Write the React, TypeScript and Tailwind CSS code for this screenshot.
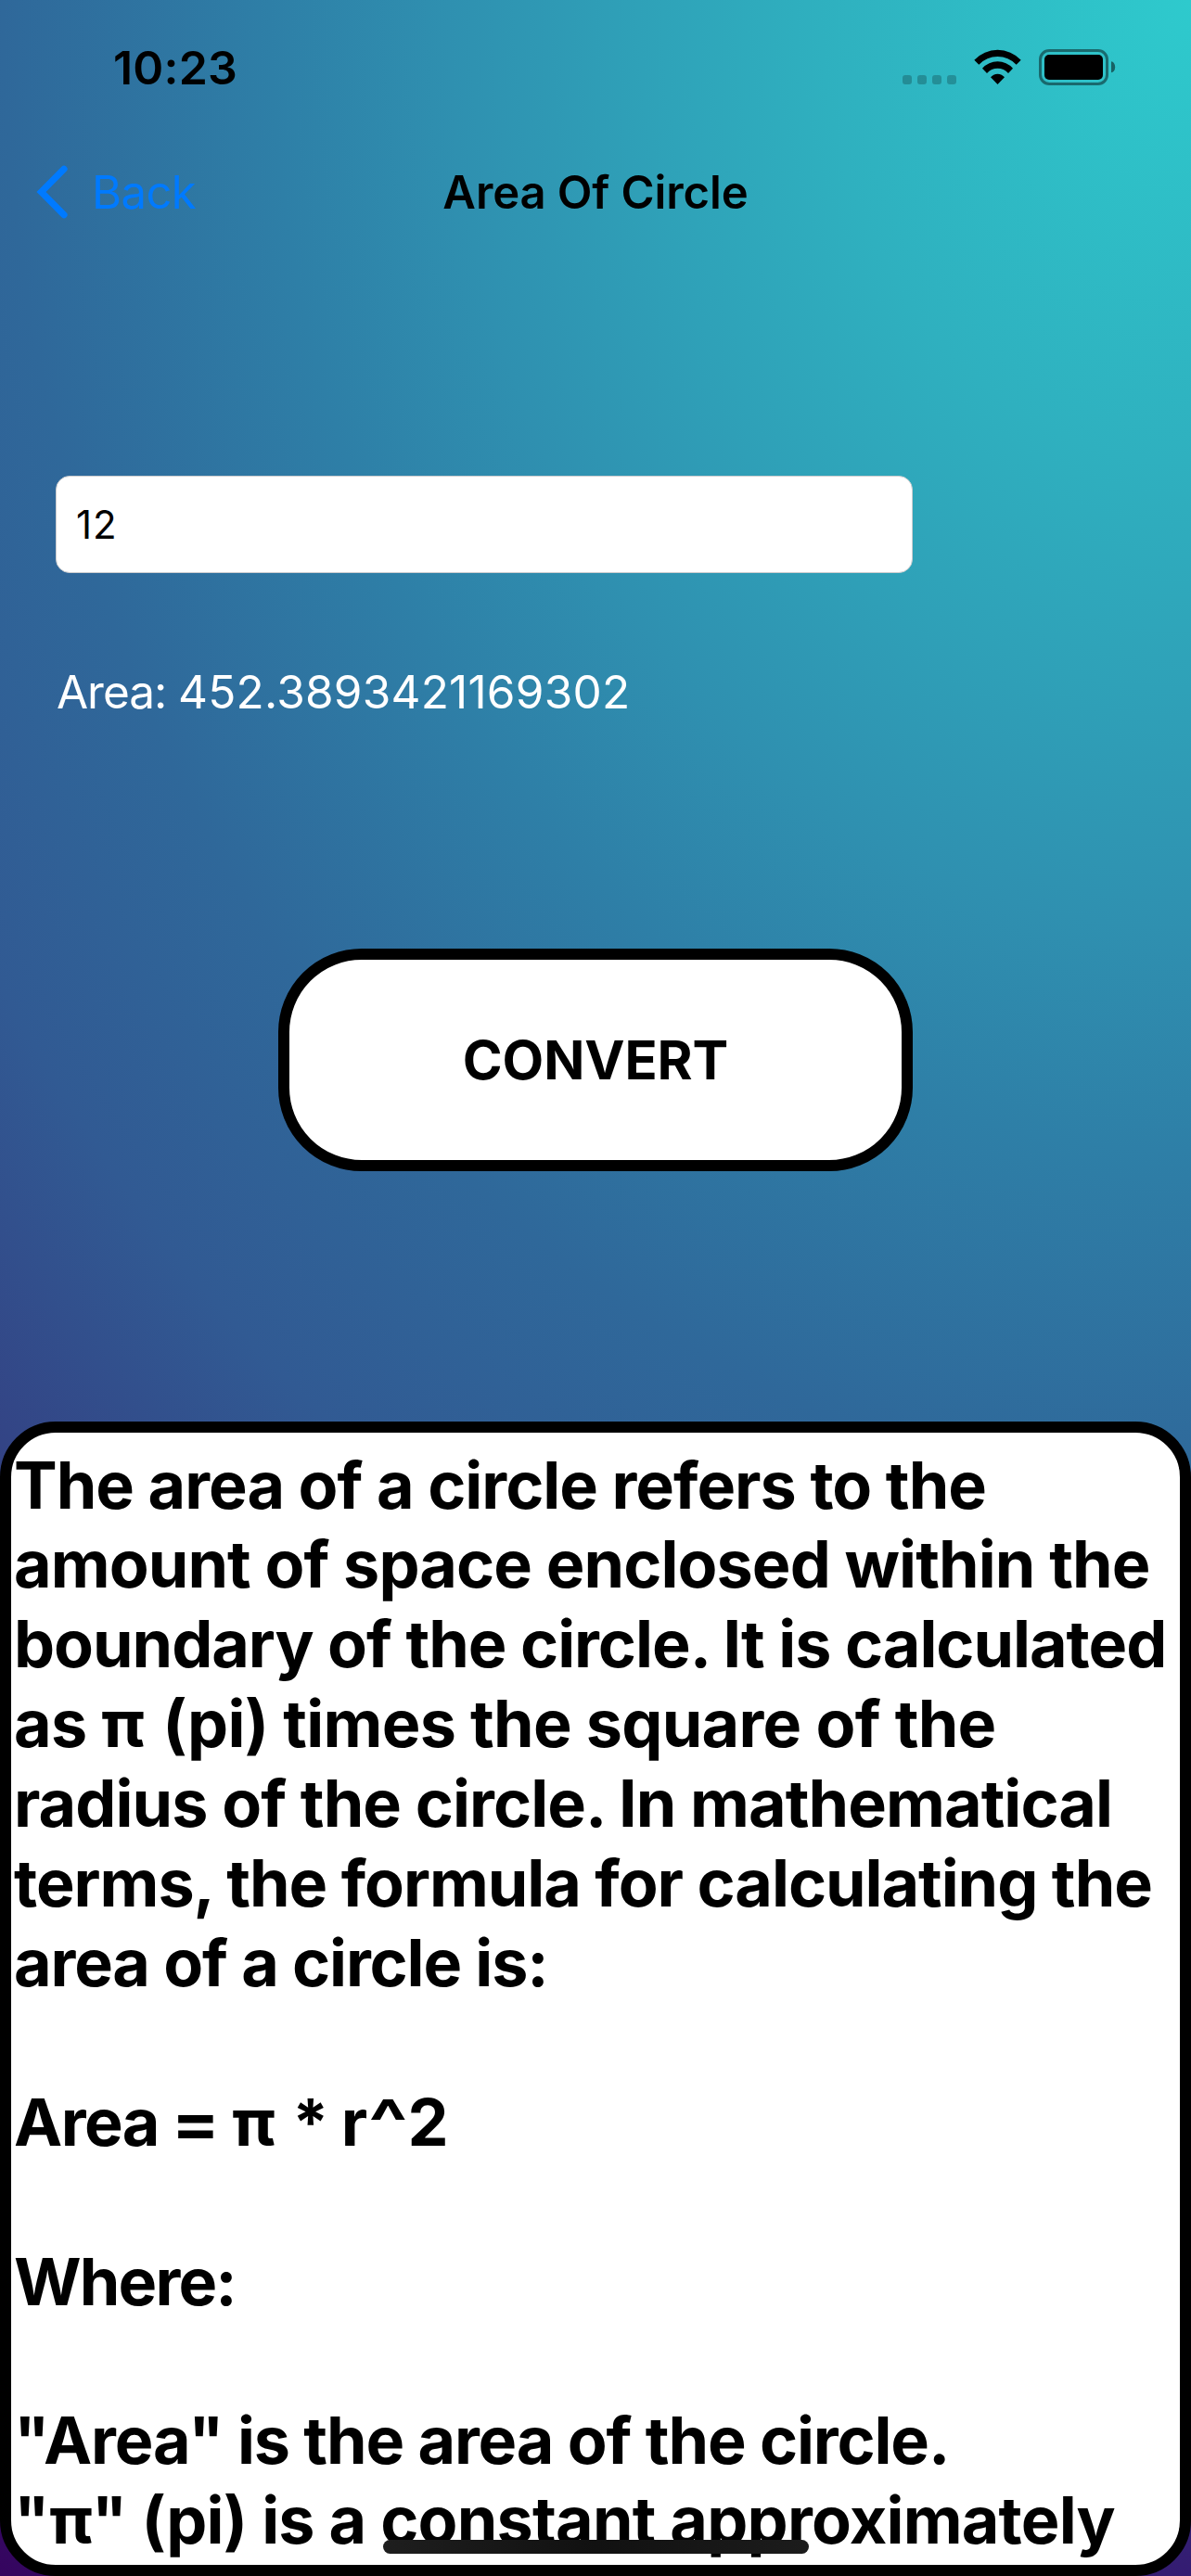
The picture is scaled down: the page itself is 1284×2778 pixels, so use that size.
import React from 'react';

function StatusIcons() {
  return (
    <svg className="h-[39px] w-[230px]" viewBox="219 69 690 117" fill="black" aria-hidden="true">
      <g opacity="0.22">
        <rect x="219" y="153" width="30" height="30" rx="9" />
        <rect x="267" y="153" width="30" height="30" rx="9" />
        <rect x="315" y="153" width="30" height="30" rx="9" />
        <rect x="363" y="153" width="30" height="30" rx="9" />
      </g>
      <path d="M451 104 A104 104 0 0 1 602 104 L587 119 A83 83 0 0 0 466 119 Z" />
      <path d="M477 131 A66.5 66.5 0 0 1 576 131 L561 147 A45 45 0 0 0 492 147 Z" />
      <path d="M504 160 A27 24 0 0 1 549 160 L526.5 183 Z" />
      <rect x="664.5" y="73.5" width="216" height="108" rx="29" fill="none" stroke="black" strokeWidth="9" opacity="0.45" />
      <rect x="678" y="87" width="189" height="81" rx="15" />
      <path d="M894 109 A12.5 18 0 0 1 894 145 Z" opacity="0.5" />
    </svg>
  );
}

function Chevron() {
  return (
    <svg className="h-[60px] w-[36px]" viewBox="0 0 36 60" fill="none" aria-hidden="true">
      <path d="M31 5.2 L6.5 30 L31 54.8" stroke="#007aff" strokeWidth="7.2" strokeLinecap="round" strokeLinejoin="miter" />
    </svg>
  );
}

const lines: { text: React.ReactNode; spacing: string }[] = [
  { text: 'The area of a circle refers to the', spacing: 'tracking-[-0.0143em]' },
  { text: 'amount of space enclosed within the', spacing: 'tracking-[-0.013em]' },
  { text: 'boundary of the circle. It is calculated', spacing: 'tracking-[-0.0146em]' },
  {
    text: (
      <>
        as <span className="mr-[5px] ml-[1px] inline-block scale-x-105">π</span> (pi) times the square of the
      </>
    ),
    spacing: 'tracking-[-0.0102em]',
  },
  { text: 'radius of the circle. In mathematical', spacing: 'tracking-[-0.0132em]' },
  { text: 'terms, the formula for calculating the', spacing: 'tracking-[-0.0149em]' },
  { text: 'area of a circle is:', spacing: 'tracking-[-0.0165em]' },
  { text: '', spacing: 'tracking-normal' },
  {
    text: (
      <>
        Area <span className="mx-px inline-block scale-x-110">=</span>{' '}
        <span className="mr-[6px] ml-[2px] inline-block scale-x-105">π</span> * r
        <span className="mx-[6px] inline-block scale-x-125">^</span>2
      </>
    ),
    spacing: 'tracking-[-0.022em]',
  },
  { text: '', spacing: 'tracking-normal' },
  { text: 'Where:', spacing: 'tracking-[-0.026em]' },
  { text: '', spacing: 'tracking-normal' },
  { text: '"Area" is the area of the circle.', spacing: 'tracking-[-0.0162em]' },
  {
    text: (
      <>
        "<span className="mx-px inline-block scale-x-105">π</span>" (pi) is a constant approximately
      </>
    ),
    spacing: 'tracking-[-0.0113em]',
  },
];

export default function App() {
  return (
    <div className="relative flex h-[2778px] w-[1284px] flex-col overflow-hidden bg-[radial-gradient(2566px_3208px_at_100%_0%,#2ecacd_0%,#2fb0bf_15.6%,#2fa1b8_23.2%,#2f90b0_31.2%,#2e7fa7_38.7%,#2f689a_49.9%,#315a93_60%,#334586_69.2%,#341c72_86.6%,#35055f_100%)] font-[Inter,sans-serif] text-black">
      <div className="flex h-[141px] items-start justify-between pr-[81px] pl-[122px]">
        <span className="mt-[43px] text-[50px] leading-[60px] font-semibold tracking-[0.004em]">10:23</span>
        <div className="mt-[53px]">
          <StatusIcons />
        </div>
      </div>

      <div className="grid h-[132px] grid-cols-3 items-center whitespace-nowrap">
        <button className="flex items-center gap-[25px] pl-[38px] text-left text-[49px] text-[#007aff]">
          <Chevron />
          <span className="pt-[2px] tracking-[-0.012em]">Back</span>
        </button>
        <h1 className="pt-[2px] text-center text-[49px] font-semibold tracking-[-0.002em]">Area Of Circle</h1>
      </div>

      <div className="mt-[240px] flex flex-col pl-[60px]">
        <input
          className="h-[105px] w-[924px] rounded-[15px] border border-[#cdcdcf] bg-white pl-[21px] text-[42px] tracking-[0.02em] outline-none"
          defaultValue="12"
        />
        <p className="mt-[98px] pl-px text-[49.5px] leading-[60px] tracking-[0.0045em] text-white">
          <span className="tracking-[-0.021em]">Area: </span>452.3893421169302
        </p>
      </div>

      <button className="mt-[247px] h-[240px] w-[684px] self-center rounded-[90px] border-[12px] border-black bg-white text-[58px] font-[650] tracking-[-0.002em]">
        CONVERT
      </button>

      <div className="mt-[270px] h-[1245px] overflow-hidden rounded-[60px] border-[12px] border-black bg-white pt-[13.5px] pl-[3px] text-[70px] leading-[85.92px] font-[650] whitespace-nowrap">
        {lines.map((line, i) => (
          <div key={i} className={`h-[85.92px] ${line.spacing}`}>
            {line.text}
          </div>
        ))}
      </div>

      <div className="absolute bottom-[24px] left-[413px] h-[15px] w-[459px] rounded-full bg-linear-to-r from-[#1e1e1e] via-[#111111] to-[#1c1c1c]" />
    </div>
  );
}
